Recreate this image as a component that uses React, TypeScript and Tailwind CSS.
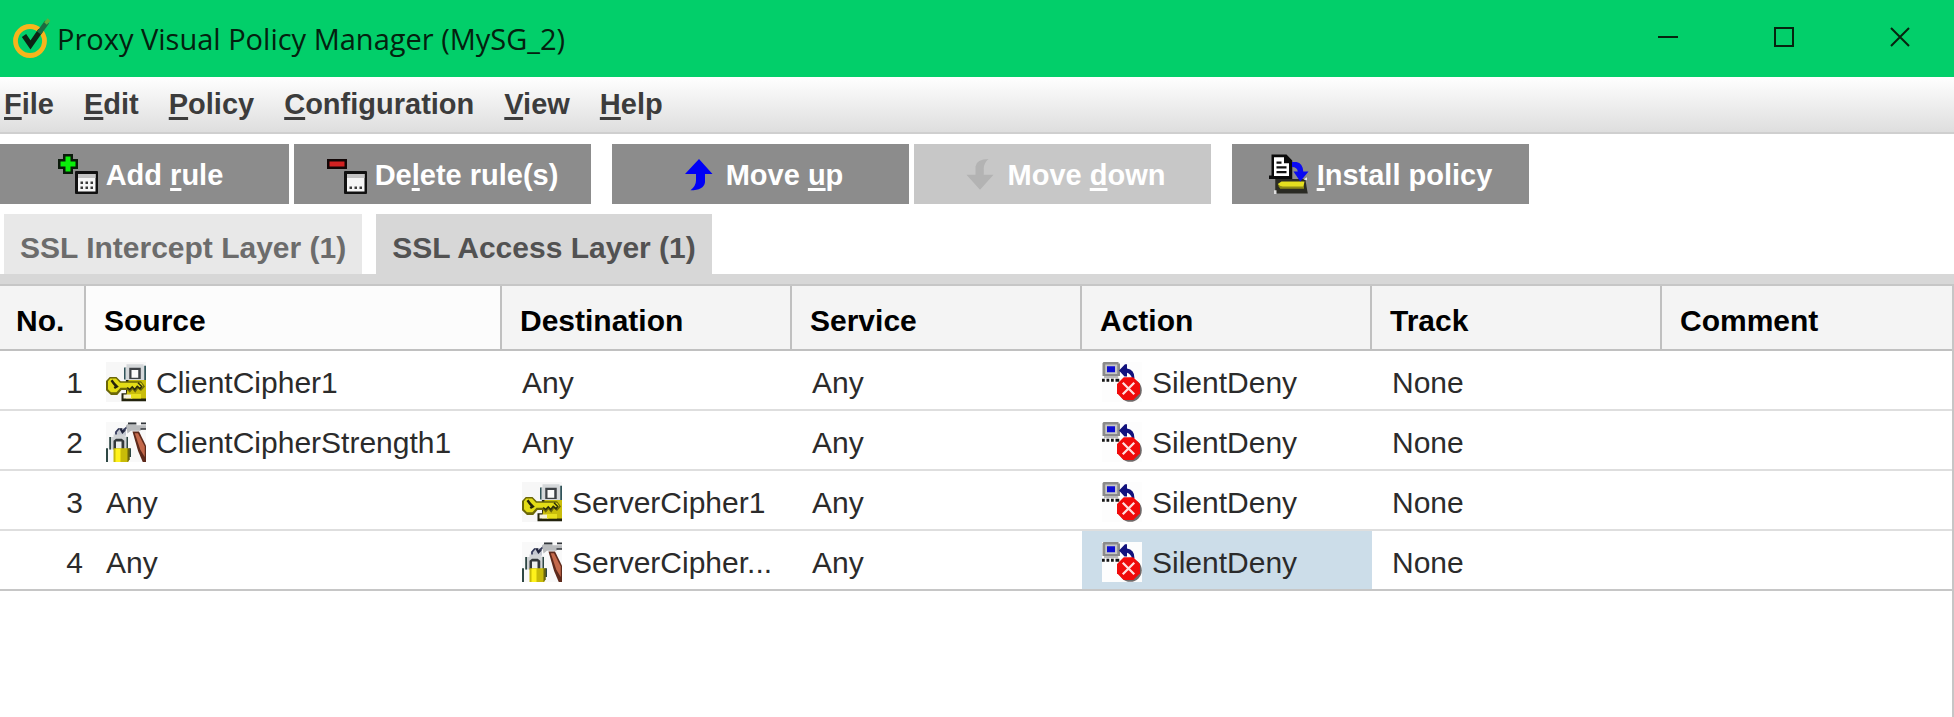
import type { ReactNode } from "react";

const icon = "block size-10 shrink-0";

function AppLogo() {
  return (
    <svg viewBox="0 0 42 42" className="size-[42px] shrink-0" aria-hidden="true">
      <circle cx="19" cy="25" r="14.5" fill="none" stroke="#f7b51c" strokeWidth="4.8" />
      <path d="M13 19.5 19.5 29 29.500 14.500" fill="none" stroke="#0c2415" strokeWidth="5.200" />
      <path d="M28 17 36 6" stroke="#1c6b40" strokeWidth="5" />
      <path d="M34.500 7.500 38 3.500" stroke="#5fae3c" strokeWidth="3.500" />
    </svg>
  );
}

function Calendar({ rows }: { rows: number[] }) {
  return (
    <>
      <rect x="6.8" y="6.8" width="9.2" height="9.2" rx="0.4" fill="#111" />
      <rect x="8" y="8" width="7" height="7" fill="#f6f6f6" />
      <rect x="8" y="8" width="7" height="1.6" fill="#c4c4c4" />
      {rows.map((y) =>
        [9, 11, 13].map((x) => <rect key={`${x}-${y}`} x={x} y={y} width="1" height="1" fill="#3a3a3a" />),
      )}
    </>
  );
}

function AddIcon() {
  return (
    <svg viewBox="0 0 16 16" className={icon} aria-hidden="true">
      <path d="M2 0h4v2h2v4H6v2H2V6H0V2h2z" fill="#0a1a0a" />
      <path d="M3 1h2v2h2v2H5v2H3V5H1V3h2z" fill="#0bf00b" />
      <Calendar rows={[11, 13]} />
    </svg>
  );
}

function DeleteIcon() {
  return (
    <svg viewBox="0 0 16 16" className={icon} aria-hidden="true">
      <rect x="0" y="2" width="8" height="4" fill="#120606" />
      <rect x="1" y="3" width="6" height="2" fill="#d32222" />
      <Calendar rows={[13]} />
    </svg>
  );
}

function UpIcon() {
  return (
    <svg viewBox="0 0 16 16" className={icon} aria-hidden="true">
      <path d="M8.400 2 13.800 8H10.800V11.300Q10.300 14.500 5 14.500Q7.200 12.700 7.200 10.600V8H2.800z" fill="#0000f5" />
    </svg>
  );
}

function DownIcon() {
  return (
    <svg viewBox="0 0 16 16" className={icon} aria-hidden="true">
      <path d="M8 14.300 2.600 8.300H6.200V5Q6.600 2 11.400 2Q9.500 3.600 9.500 5.800V8.300H13.400z" fill="#b3b3b3" />
    </svg>
  );
}

function InstallIcon() {
  return (
    <svg viewBox="0 0 16 16" className={icon} aria-hidden="true">
      <path d="M2.500 10h12l1 5.800H2.500z" fill="#2b2b24" />
      <path d="M3.500 12 5 11h9.200l-.5 2.600H5z" fill="#e4de20" />
      <path d="M3.500 12.500 4.500 13.900h9.500v-.9H5.500z" fill="#8e8a16" />
      <path d="M2 14.500h1V16H2z" fill="#ddd" />
      <path d="M1 .2h6L9.300 2.600V10H0V8.600h1z" fill="#0b0b0b" />
      <path d="M2 1.300h4v2.400h2v5.100H2z" fill="#fff" />
      <path d="M3 3h2v.9H3zM3 4.900h4v.9H3zM3 6.800h4v.9H3z" fill="#111" />
      <path d="M9.200 3.200H11Q13.500 3.700 13.700 7H15.800L12.500 11 9.800 7H11.500Q11.300 5.200 9.200 5.200z" fill="#0a0af2" />
      <path d="M13.800 10.200l1.400-.9v1.200z" fill="#eee" />
    </svg>
  );
}

function CipherIcon() {
  return (
    <svg viewBox="0 0 16 16" className={icon} aria-hidden="true">
      <rect width="16" height="16" fill="#f7f7f7" />
      <path d="M8.200 .9H15v.600h1V8H7.600V2h.6z" fill="#d5d8da" />
      <path d="M7.200 2.200h.6V7h-.6zM15.300 1.500H16V8h-.7z" fill="#31545a" />
      <path d="M9.300 2.300h4.600V6.800H9.300z" fill="#3d4145" />
      <path d="M10.200 3.200h2.700V6.300h-2.700z" fill="#fbfbfb" />
      <path d="M8 7.200H16V15.700H6.200V12.500H8z" fill="#23230d" />
      <path d="M9 7.200h7v7.400H8z" fill="#c9bd0b" />
      <path d="M7 13h3.500v1.600H7z" fill="#f5f2d8" />
      <path d="M10 12.800h4v1.800h-4z" fill="#e8e01e" />
      <path d="M1.500 6H4.200L5.900 7.700H14L15.600 9.800 14 11.600 12.800 10.700 11.700 12.300 10.600 11 9.500 12.300 8.500 11.200H6.200L4.500 13.200H2L0 11.300V7.600z" fill="#6b6708" />
      <path d="M1.700 6.600H4L5.600 8.300H14L14.900 9.700 14 10.600 12.700 9.600 11.600 11 10.500 9.900 9.400 11 8.500 10.300H5.800L4.200 12.100H2L.8 10.900V7.700z" fill="#e3dc16" />
      <path d="M2.200 7.300 3.200 8.700 4.300 9.800 3.300 10.400" fill="none" stroke="#24230a" strokeWidth="1" />
      <path d="M12.800 8.300 14.300 9.800 13.600 10.700 12.500 9.700 11.500 11 10.500 9.900 9.500 11 8.500 10.200" fill="none" stroke="#2a2a0c" strokeWidth=".6" />
    </svg>
  );
}

function StrengthIcon() {
  return (
    <svg viewBox="0 0 16 16" className={icon} aria-hidden="true">
      <rect width="16" height="16" fill="#f9f9f9" />
      <path d="M3.500 5.500V4L5 2.500h3V5.500z" fill="#c3c7d0" />
      <path d="M4 5.200V4L5.200 2.600M6.500 3.800 9 1.500" fill="none" stroke="#343a5a" strokeWidth=".7" />
      <path d="M5.200 2.500h1.300V3.300H8l-1.500 1.500z" fill="#20243d" />
      <path d="M8 1.300 9.500.3h2.700v1H16v1.500h-1.500l-.8.700H10L8.600 4.600z" fill="#b9bbbd" />
      <path d="M8.800.2h3.300v.7H8.800zM14 .2h2v.7h-2zM13.800 2.500H16v.6h-2.200z" fill="#32363b" />
      <path d="M10.600 3.800h2.600L16 9.500V16h-1.300L12.800 11.500z" fill="#5e2a1c" />
      <path d="M11.500 4.500h1.300L15.500 9.800V14L13.700 11z" fill="#c4694b" />
      <path d="M1.300 6H3V5h4.500v.8h1.200V11H1.300z" fill="#d0d3d5" />
      <path d="M1.300 6H2v5h-.7zM8.200 6h.6v5h-.6zM0 10.500h.800V16H0zM9.200 10.500h.800V14h-.800z" fill="#2e4744" />
      <path d="M3 7.500 4 6.700h2.300l1 .8V11H3z" fill="#33383b" />
      <path d="M4 7.800h2.200V11H4z" fill="#eceeee" />
      <path d="M3 10.500h6V16H3z" fill="#c8bb08" />
      <path d="M3.800 10.700h2V16h-2z" fill="#fff21b" />
      <path d="M8.600 10.500h.9V15l-.9 1z" fill="#6a630d" />
    </svg>
  );
}

function DenyIcon() {
  return (
    <svg viewBox="0 0 16 16" className={icon} aria-hidden="true">
      <rect width="16" height="16" fill="#fdfdfd" />
      <path d="M.6 0h6v.6h.6v5H.2V.500z" fill="#8b8b8b" />
      <path d="M1.300 1h4.800v3.800H1.300z" fill="#c6c6c6" />
      <path d="M2 1.700h3.200v2.400H2z" fill="#0d0dd0" />
      <path d="M.8 5.600h5.700v.9H.8z" fill="#bcbcbc" />
      <path d="M0 6.700h1.100v1.200H0zM1.800 6.700h1.100v1.200H1.800zM3.600 6.700h1.100v1.200H3.600zM5.400 6.700h1.500v1.200H5.400z" fill="#151515" />
      <path d="M6.800 3.400 9.200.9H10v1.700Q13 3 13 6.500h-1Q11.500 4.700 10 4.300V5.800H9z" fill="#12127e" />
      <circle cx="11.300" cy="11.300" r="4.600" fill="#6f6868" />
      <path d="M8.700 6.100h3.800l2.700 2.700v3.700L12.500 15.200H8.700L6 12.500V8.800z" fill="#f00a0a" />
      <path d="M8.300 8.300 12.900 12.900M12.900 8.300 8.300 12.900" stroke="#ffdede" strokeWidth=".9" />
    </svg>
  );
}

function Key({ children }: { children: string }) {
  return <span className="underline decoration-[3px] underline-offset-3 [text-decoration-skip-ink:none]">{children}</span>;
}

const menus = [
  ["F", "ile"],
  ["E", "dit"],
  ["P", "olicy"],
  ["C", "onfiguration"],
  ["V", "iew"],
  ["H", "elp"],
];

function ToolButton({
  icon,
  label,
  className,
  disabled,
}: {
  icon: ReactNode;
  label: [string, string, string];
  className: string;
  disabled?: boolean;
}) {
  return (
    <button
      type="button"
      disabled={disabled}
      className={`flex h-[60px] items-center justify-center gap-2 bg-[#8c8c8c] text-[29px] font-bold whitespace-pre text-white disabled:bg-[#c7c7c7] ${className}`}
    >
      {icon}
      <span className="pt-0.5">
        {label[0]}
        <Key>{label[1]}</Key>
        {label[2]}
      </span>
    </button>
  );
}

type Cell = { text: string; icon?: "cipher" | "strength" | "deny"; selected?: boolean };

const icons = { cipher: <CipherIcon />, strength: <StrengthIcon />, deny: <DenyIcon /> };

const any: Cell = { text: "Any" };
const none: Cell = { text: "None" };
const deny: Cell = { text: "SilentDeny", icon: "deny" };
const blank: Cell = { text: "" };

const rules: Cell[][] = [
  [{ text: "ClientCipher1", icon: "cipher" }, any, any, deny, none, blank],
  [{ text: "ClientCipherStrength1", icon: "strength" }, any, any, deny, none, blank],
  [any, { text: "ServerCipher1", icon: "cipher" }, any, deny, none, blank],
  [any, { text: "ServerCipher...", icon: "strength" }, any, { ...deny, selected: true }, none, blank],
];

const columns = ["Source", "Destination", "Service", "Action", "Track", "Comment"];

function WindowButton({ label, children }: { label: string; children: ReactNode }) {
  return (
    <button type="button" aria-label={label} className="flex h-[73px] w-24 items-center justify-center">
      <svg viewBox="0 0 22 22" className="size-[22px]" fill="none" stroke="#06240f" strokeWidth="2">
        {children}
      </svg>
    </button>
  );
}

export default function App() {
  return (
    <div className="flex min-h-screen flex-col bg-white font-['Liberation_Sans',Arial,sans-serif] text-[30px] leading-9 text-[#2b2b2b]">
      <header className="flex h-[77px] items-start justify-between bg-[#02cf6a] pr-1.5">
        <div className="flex h-[77px] items-center gap-1 pl-[11px]">
          <div className="pb-1">
            <AppLogo />
          </div>
          <h1 className="font-['Open_Sans','Noto_Sans',sans-serif] text-[29px] whitespace-nowrap text-[#04210f]">
            Proxy Visual Policy Manager (MySG_2)
          </h1>
        </div>
        <div className="flex gap-5">
          <WindowButton label="Minimize">
            <path d="M1 11h20" />
          </WindowButton>
          <WindowButton label="Maximize">
            <rect x="2" y="2" width="18" height="18" />
          </WindowButton>
          <WindowButton label="Close">
            <path d="M2 2l18 18M20 2 2 20" />
          </WindowButton>
        </div>
      </header>

      <nav className="flex h-[57px] items-center gap-[30px] border-b-2 border-[#cfcfcf] bg-linear-to-b from-white to-[#dedede] pb-0.5 pl-1 text-[29px] font-bold text-[#3c3c3c]">
        {menus.map(([key, rest]) => (
          <button type="button" key={key}>
            <Key>{key}</Key>
            {rest}
          </button>
        ))}
      </nav>

      <div className="flex pt-2.5">
        <ToolButton icon={<AddIcon />} label={["Add ", "r", "ule"]} className="w-[289px] pr-2" />
        <ToolButton icon={<DeleteIcon />} label={["De", "l", "ete rule(s)"]} className="ml-[5px] w-[297px]" />
        <ToolButton icon={<UpIcon />} label={["Move ", "u", "p"]} className="ml-[21px] w-[297px]" />
        <ToolButton icon={<DownIcon />} label={["Move ", "d", "own"]} className="ml-[5px] w-[297px]" disabled />
        <ToolButton icon={<InstallIcon />} label={["", "I", "nstall policy"]} className="ml-[21px] w-[297px]" />
      </div>

      <div role="tablist" className="flex gap-3.5 border-b-10 border-[#d7d7d7] pt-2.5 pl-1 font-bold">
        <button type="button" role="tab" aria-selected="false" className="h-[60px] bg-[#e8e8e8] px-4 pt-2 text-[#6c6c6c]">
          SSL Intercept Layer (1)
        </button>
        <button type="button" role="tab" aria-selected="true" className="h-[60px] bg-[#d7d7d7] px-4 pt-2 text-[#525252]">
          SSL Access Layer (1)
        </button>
      </div>

      <main className="grow border-t-2 border-r-2 border-[#c6c6c6]">
        <table className="w-full table-fixed border-separate border-spacing-0">
          <colgroup>
            <col className="w-[86px]" />
            <col className="w-[416px]" />
            <col className="w-[290px]" />
            <col className="w-[290px]" />
            <col className="w-[290px]" />
            <col className="w-[290px]" />
            <col />
          </colgroup>
          <thead>
            <tr className="h-[65px] text-left text-black">
              <th className="border-r-2 border-b-2 border-[#c0c0c0] bg-[#f4f4f4] pt-1.5 pl-4">No.</th>
              {columns.map((name) => (
                <th
                  key={name}
                  className="border-r-2 border-b-2 border-[#c0c0c0] bg-[#f4f4f4] pt-1.5 pl-[18px] last:border-r-0 nth-2:bg-[#fcfcfc]"
                >
                  {name}
                </th>
              ))}
            </tr>
          </thead>
          <tbody>
            {rules.map((cells, row) => (
              <tr key={row} className="group h-[60px]">
                <td className="border-b-2 border-[#dedede] pt-1.5 pr-[3px] text-right group-last:border-[#c6c6c6]">{row + 1}</td>
                {cells.map((cell, col) => (
                  <td
                    key={col}
                    className={`border-b-2 border-[#dedede] pt-1 pl-5 group-last:border-[#c6c6c6] ${cell.selected ? "bg-[#ccdde9]" : ""}`}
                  >
                    <div className="flex items-center gap-2.5 whitespace-nowrap">
                      {cell.icon && icons[cell.icon]}
                      <span className="pt-0.5">{cell.text}</span>
                    </div>
                  </td>
                ))}
              </tr>
            ))}
          </tbody>
        </table>
      </main>
    </div>
  );
}
